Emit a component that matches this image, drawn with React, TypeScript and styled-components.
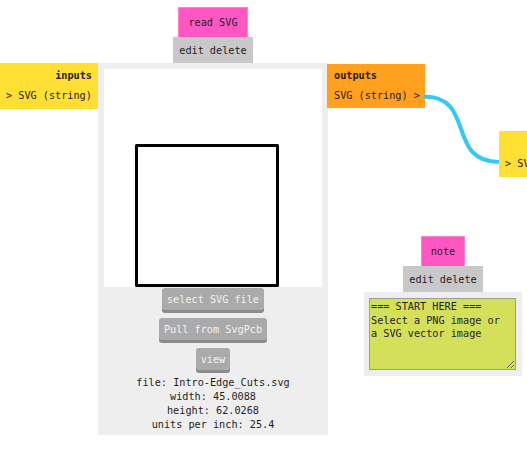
import React from "react";
import styled, { createGlobalStyle } from "styled-components";

const GlobalStyle = createGlobalStyle`
  html, body {
    margin: 0;
    padding: 0;
    background: #fff;
    overflow: hidden;
  }
  body {
    font-family: "DejaVu Sans Mono", "Liberation Mono", monospace;
    font-size: 10.2px;
    color: #222;
  }
`;

const Canvas = styled.div`
  position: relative;
  width: 527px;
  height: 475px;
  overflow: hidden;
`;

const Wires = styled.svg`
  position: absolute;
  left: 0;
  top: 0;
  pointer-events: none;
  z-index: 2;
`;

const Node = styled.div<{ $x: number; $y: number }>`
  position: absolute;
  left: ${(p) => p.$x}px;
  top: ${(p) => p.$y}px;
  display: grid;
  grid-template-columns: auto auto auto;
  align-items: start;
`;

const Header = styled.div`
  grid-column: 2;
  display: flex;
  flex-direction: column;
  align-items: center;
`;

const Title = styled.div`
  background: #ff57c2;
  height: 30px;
  padding: 0 9px;
  display: flex;
  align-items: center;
  border: 1px solid #ff7fd2;
  border-bottom: none;
  box-sizing: border-box;
`;

const EditBar = styled.div`
  background: #c8c8c8;
  height: 26px;
  padding: 0 6px;
  display: flex;
  align-items: center;
  gap: 6px;
`;

const Ports = styled.div<{ $side: "in" | "out"; $width: number }>`
  grid-row: 2;
  width: ${(p) => p.$width}px;
  box-sizing: border-box;
  background: ${(p) => (p.$side === "in" ? "#ffdf33" : "#ffa01f")};
  padding: ${(p) => (p.$side === "in" ? "3px 6px 3px 6px" : "2px 7px 2px 7px")};
  margin-top: ${(p) => (p.$side === "in" ? 0 : 1)}px;
  margin-left: ${(p) => (p.$side === "out" ? -1 : 0)}px;
  line-height: 20px;
  white-space: nowrap;
`;

const PortTitle = styled.div<{ $align: "left" | "right" }>`
  font-weight: bold;
  text-align: ${(p) => p.$align};
  height: 20px;
`;

const Panel = styled.div`
  grid-row: 2;
  grid-column: 2;
  width: 230px;
  height: 372px;
  box-sizing: border-box;
  background: #eeeeee;
  padding: 6px 6px 0;
  display: flex;
  flex-direction: column;
  align-items: center;
`;

const Preview = styled.div`
  width: 218px;
  height: 218px;
  background: #fff;
  flex-shrink: 0;
`;

const ButtonStack = styled.div`
  margin-top: 1px;
  display: flex;
  flex-direction: column;
  align-items: center;
  gap: 8px;
`;

const Button = styled.div`
  height: 22px;
  padding: 0 5px;
  display: flex;
  align-items: center;
  background: #aaaaaa;
  color: #f2f2f2;
  border-radius: 3px;
  box-shadow: 0 3px 0 #8c8c8c;
`;

const Info = styled.div`
  margin-top: 6px;
  text-align: center;
  line-height: 14px;
  color: #1e1e1e;
`;

const NoteBody = styled.div`
  background: #eeeeee;
  width: 158px;
  height: 84px;
  box-sizing: border-box;
  padding: 6px 6px 0 5px;
`;

const NoteText = styled.textarea`
  width: 147px;
  height: 72px;
  box-sizing: border-box;
  margin: 0;
  padding: 1px 1px;
  border: 1px solid #a0a08a;
  background: #d5e05a;
  color: #222;
  font-family: "DejaVu Sans Mono", "Liberation Mono", monospace;
  font-size: 10.2px;
  line-height: 13.5px;
  resize: both;
  outline: none;
`;

const NoteNode = styled.div<{ $x: number; $y: number }>`
  position: absolute;
  left: ${(p) => p.$x}px;
  top: ${(p) => p.$y}px;
  display: flex;
  flex-direction: column;
  align-items: center;
`;

const App: React.FC = () => {
  return (
    <Canvas>
      <GlobalStyle />
      <Node $x={0} $y={7}>
        <Header>
          <Title>read SVG</Title>
          <EditBar>
            <span>edit</span>
            <span>delete</span>
          </EditBar>
        </Header>
        <Ports $side="in" $width={98}>
          <PortTitle $align="right">inputs</PortTitle>
          <div>&gt; SVG (string)</div>
        </Ports>
        <Panel>
          <Preview>
            <svg width="218" height="218" viewBox="0 0 218 218">
              <rect
                x="32.5"
                y="76.5"
                width="141"
                height="140"
                fill="none"
                stroke="#000"
                strokeWidth="3"
                strokeLinejoin="round"
              />
            </svg>
          </Preview>
          <ButtonStack>
            <Button>select SVG file</Button>
            <Button>Pull from SvgPcb</Button>
            <Button>view</Button>
          </ButtonStack>
          <Info>
            <div>file: Intro-Edge_Cuts.svg</div>
            <div>width: 45.0088</div>
            <div>height: 62.0268</div>
            <div>units per inch: 25.4</div>
          </Info>
        </Panel>
        <Ports $side="out" $width={98}>
          <PortTitle $align="left">outputs</PortTitle>
          <div>SVG (string) &gt;</div>
        </Ports>
      </Node>

      <Node $x={499} $y={131}>
        <Ports $side="in" $width={98} style={{ gridColumn: 1 }}>
          <PortTitle $align="right">inputs</PortTitle>
          <div>&gt; SVG (string)</div>
        </Ports>
      </Node>

      <NoteNode $x={364} $y={236}>
        <Title>note</Title>
        <EditBar>
          <span>edit</span>
          <span>delete</span>
        </EditBar>
        <NoteBody>
          <NoteText
            readOnly
            defaultValue={"=== START HERE ===\nSelect a PNG image or\na SVG vector image"}
          />
        </NoteBody>
      </NoteNode>

      <Wires width="527" height="475">
        <path
          d="M424 96.5 C 476 96.5, 446 162, 499 162"
          fill="none"
          stroke="#35c7f5"
          strokeWidth="4"
        />
      </Wires>
    </Canvas>
  );
};

export default App;
